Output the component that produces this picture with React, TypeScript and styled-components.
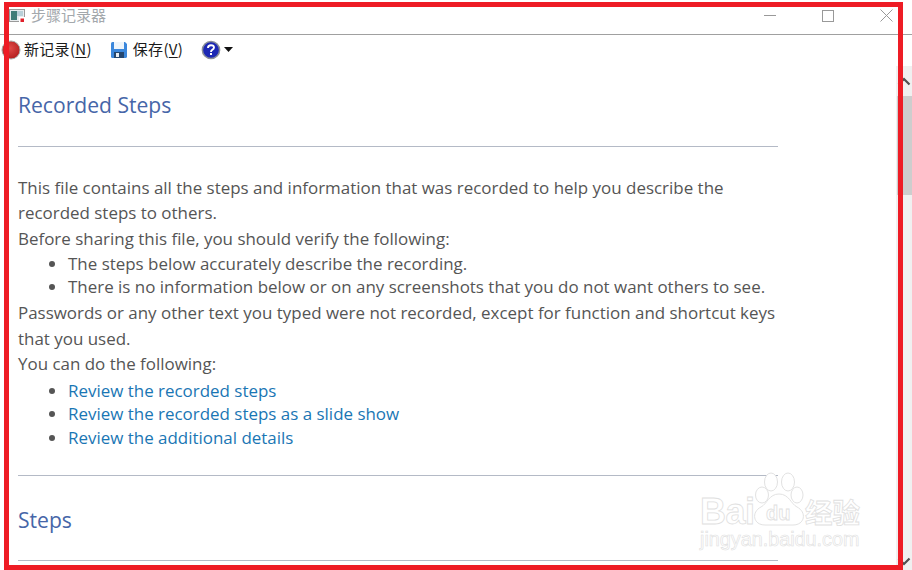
import React from "react";
import styled, { createGlobalStyle } from "styled-components";

const GlobalStyle = createGlobalStyle`
  html, body {
    margin: 0;
    padding: 0;
    background: white;
  }
`;

const Window = styled.div`
  position: relative;
  display: flex;
  flex-direction: column;
  width: 912px;
  height: 570px;
  overflow: hidden;
  background-color: white;
  font-family: "Open Sans", "Noto Sans CJK SC", sans-serif;
`;

const TitleBar = styled.div`
  display: flex;
  align-items: center;
  height: 35px;
  padding: 0 0 3px 9px;
  box-sizing: border-box;
  border-bottom: 1px solid #a0a0a0;
  flex-shrink: 0;
`;

const TitleText = styled.span`
  margin: 0 0 2px 5px;
  font-family: "Noto Sans CJK SC", sans-serif;
  font-size: 15px;
  color: #a3a8ac;
`;

const WindowButtons = styled.div`
  display: flex;
  align-items: center;
  gap: 46px;
  margin-left: auto;
  margin-right: 19px;
`;

const Toolbar = styled.div`
  display: flex;
  align-items: center;
  height: 29px;
  flex-shrink: 0;
  padding-left: 1px;
`;

const ToolButton = styled.div<{ $gap: number; $iconGap: number }>`
  display: flex;
  align-items: center;
  gap: ${({ $iconGap }) => $iconGap}px;
  margin-right: ${({ $gap }) => $gap}px;
  font-family: "Noto Sans CJK SC", sans-serif;
  font-size: 15px;
  letter-spacing: 0.3px;
  color: #1a1a1a;

  u {
    text-underline-offset: 2px;
  }
`;

const ToolLabel = styled.span`
  margin-bottom: 3px;
`;

const Body = styled.div`
  flex: 1;
  display: flex;
  min-height: 0;
`;

const Content = styled.div`
  flex: 1;
  padding: 0 0 0 18px;
  overflow: hidden;
`;

const Column = styled.div`
  width: 760px;
`;

const Heading = styled.h1<{ $top: number; $bottom: number }>`
  margin: ${({ $top }) => $top}px 0 ${({ $bottom }) => $bottom}px;
  font-size: 21.1px;
  line-height: 30px;
  font-weight: 400;
  color: #4666a8;
`;

const Rule = styled.hr<{ $top?: number; $bottom?: number }>`
  margin: ${({ $top }) => $top ?? 0}px 0 ${({ $bottom }) => $bottom ?? 0}px;
  border: none;
  height: 1px;
  background-color: #b4bac6;
`;

const Paragraph = styled.p`
  margin: 0;
  font-size: 16.95px;
  line-height: 25.3px;
  color: #555555;
`;

const Bullets = styled.ul<{ $top: number }>`
  margin: ${({ $top }) => $top}px 0 1.5px;
  padding-left: 50px;
  font-size: 16.95px;
  line-height: 23.5px;
  color: #555555;
`;

const LinkItem = styled.a`
  color: #1a76b4;
  text-decoration: none;
`;

const ScrollBar = styled.div`
  display: flex;
  flex-direction: column;
  width: 16px;
  margin-top: 2px;
  flex-shrink: 0;
  background-color: #f0f0f0;
`;

const ScrollArrow = styled.div<{ $height: number }>`
  display: flex;
  align-items: center;
  justify-content: center;
  height: ${({ $height }) => $height}px;
  flex-shrink: 0;
`;

const ScrollThumb = styled.div`
  height: 99px;
  margin-left: 1px;
  background-color: #cdcdcd;
  flex-shrink: 0;
`;

const ScrollSpace = styled.div`
  flex: 1;
`;

const Frame = styled.div`
  position: absolute;
  left: 4px;
  top: 2px;
  width: 899px;
  height: 568px;
  box-sizing: border-box;
  border: 5px solid #ee1c25;
  pointer-events: none;
`;

const Watermark = styled.svg`
  position: absolute;
  left: 695px;
  top: 470px;
  pointer-events: none;
`;

const AppIcon = () => (
  <svg width="17" height="17" viewBox="0 0 17 17">
    <rect x="0.5" y="2.5" width="15" height="12" fill="#e8ecee" stroke="#9a9a9a" />
    <rect x="2" y="4" width="6" height="9" fill="#3f7d78" />
    <rect x="8" y="4" width="6" height="5" fill="#b8cfd8" />
    <rect x="10" y="10" width="6" height="6" fill="white" />
    <rect x="11.5" y="11.5" width="3.5" height="3.5" fill="#e0202a" />
  </svg>
);

const RecordIcon = () => (
  <svg width="20" height="20" viewBox="0 0 20 20">
    <defs>
      <radialGradient id="rec" cx="45%" cy="40%" r="65%">
        <stop offset="0%" stopColor="#e04a48" />
        <stop offset="100%" stopColor="#b01c1c" />
      </radialGradient>
    </defs>
    <circle cx="10" cy="10" r="9" fill="url(#rec)" stroke="#a9a9a9" />
  </svg>
);

const SaveIcon = () => (
  <svg width="18" height="18" viewBox="0 0 18 18">
    <path d="M1 2.5 Q1 1 2.5 1 H15 L17 3 V15.5 Q17 17 15.5 17 H2.5 Q1 17 1 15.5 Z" fill="#3b87dc" />
    <rect x="4" y="1" width="10" height="7" fill="#eef5fb" />
    <rect x="4" y="11" width="10" height="6" fill="#24466f" />
    <rect x="6" y="12" width="3" height="4" fill="#e8eef4" />
  </svg>
);

const HelpIcon = () => (
  <svg width="20" height="20" viewBox="0 0 20 20">
    <circle cx="10" cy="10" r="8.6" fill="#1c28b4" stroke="#8a8f98" strokeWidth="1.5" />
    <path d="M7 8 Q7 5.2 10 5.2 Q13 5.2 13 7.6 Q13 9 11.2 9.9 Q10 10.5 10 12" fill="none" stroke="white" strokeWidth="1.9" />
    <rect x="9" y="13" width="2" height="2" fill="white" />
  </svg>
);

const Caret = () => (
  <svg width="9" height="5" viewBox="0 0 9 5">
    <path d="M0 0 H9 L4.5 5 Z" fill="#111" />
  </svg>
);

const App = () => (
  <Window>
    <GlobalStyle />
    <TitleBar>
      <AppIcon />
      <TitleText>步骤记录器</TitleText>
      <WindowButtons>
        <svg width="12" height="12" viewBox="0 0 12 12">
          <path d="M0 5.5 H12" stroke="#999" />
        </svg>
        <svg width="12" height="12" viewBox="0 0 12 12">
          <rect x="0.5" y="0.5" width="11" height="11" fill="none" stroke="#999" />
        </svg>
        <svg width="13" height="13" viewBox="0 0 13 13">
          <path d="M0.5 0.5 L12.5 12.5 M12.5 0.5 L0.5 12.5" stroke="#999" />
        </svg>
      </WindowButtons>
    </TitleBar>
    <Toolbar>
      <ToolButton $gap={18} $iconGap={3}>
        <RecordIcon />
        <ToolLabel>新记录(<u>N</u>)</ToolLabel>
      </ToolButton>
      <ToolButton $gap={18} $iconGap={5}>
        <SaveIcon />
        <ToolLabel>保存(<u>V</u>)</ToolLabel>
      </ToolButton>
      <ToolButton $gap={0} $iconGap={3}>
        <HelpIcon />
        <Caret />
      </ToolButton>
    </Toolbar>
    <Body>
      <Content>
        <Column>
          <Heading $top={26} $bottom={26}>Recorded Steps</Heading>
          <Rule $bottom={28} />
          <Paragraph>
            This file contains all the steps and information that was recorded to help you describe the recorded steps to others.
          </Paragraph>
          <Paragraph>Before sharing this file, you should verify the following:</Paragraph>
          <Bullets $top={1}>
            <li>The steps below accurately describe the recording.</li>
            <li>There is no information below or on any screenshots that you do not want others to see.</li>
          </Bullets>
          <Paragraph>
            Passwords or any other text you typed were not recorded, except for function and shortcut keys that you used.
          </Paragraph>
          <Paragraph>You can do the following:</Paragraph>
          <Bullets $top={2.5}>
            <li><LinkItem>Review the recorded steps</LinkItem></li>
            <li><LinkItem>Review the recorded steps as a slide show</LinkItem></li>
            <li><LinkItem>Review the additional details</LinkItem></li>
          </Bullets>
          <Rule $top={26} />
          <Heading $top={29} $bottom={25}>Steps</Heading>
          <Rule />
        </Column>
      </Content>
      <ScrollBar>
        <ScrollArrow $height={30}>
          <svg width="14" height="9" viewBox="0 0 14 9">
            <path d="M1.5 7.5 L7 2 L12.5 7.5" fill="none" stroke="#505050" strokeWidth="2.2" />
          </svg>
        </ScrollArrow>
        <ScrollThumb />
        <ScrollSpace />
        <ScrollArrow $height={18}>
          <svg width="14" height="9" viewBox="0 0 14 9">
            <path d="M1.5 1.5 L7 7 L12.5 1.5" fill="none" stroke="#505050" strokeWidth="2.2" />
          </svg>
        </ScrollArrow>
      </ScrollBar>
    </Body>
    <Watermark width="190" height="90" viewBox="0 0 190 90">
      <g fill="white" stroke="#e2e2e2" strokeWidth="1">
        <ellipse cx="76" cy="12" rx="6.5" ry="9" />
        <ellipse cx="93" cy="12" rx="6.5" ry="9" />
        <ellipse cx="67" cy="25" rx="6.5" ry="8" />
        <ellipse cx="102" cy="25" rx="6" ry="8" />
        <path d="M84 24 C74 24 72 34 66 37 C56 42 58 55 70 55 H98 C110 55 112 42 102 37 C96 34 94 24 84 24 Z" />
      </g>
      <g fontFamily="'Liberation Sans', sans-serif" fill="white" stroke="#e0e0e0" strokeWidth="0.8">
        <text x="5" y="54" fontSize="36" fontWeight="700" textLength="55">Bai</text>
        <text x="71" y="50" fontSize="20" fontWeight="700">du</text>
        <text x="110" y="53" fontSize="27.5" fontFamily="'Noto Sans CJK SC', sans-serif" fontWeight="700">经验</text>
        <text x="5" y="76" fontSize="19.8" strokeWidth="0.6">jingyan.baidu.com</text>
      </g>
    </Watermark>
    <Frame />
  </Window>
);

export default App;
